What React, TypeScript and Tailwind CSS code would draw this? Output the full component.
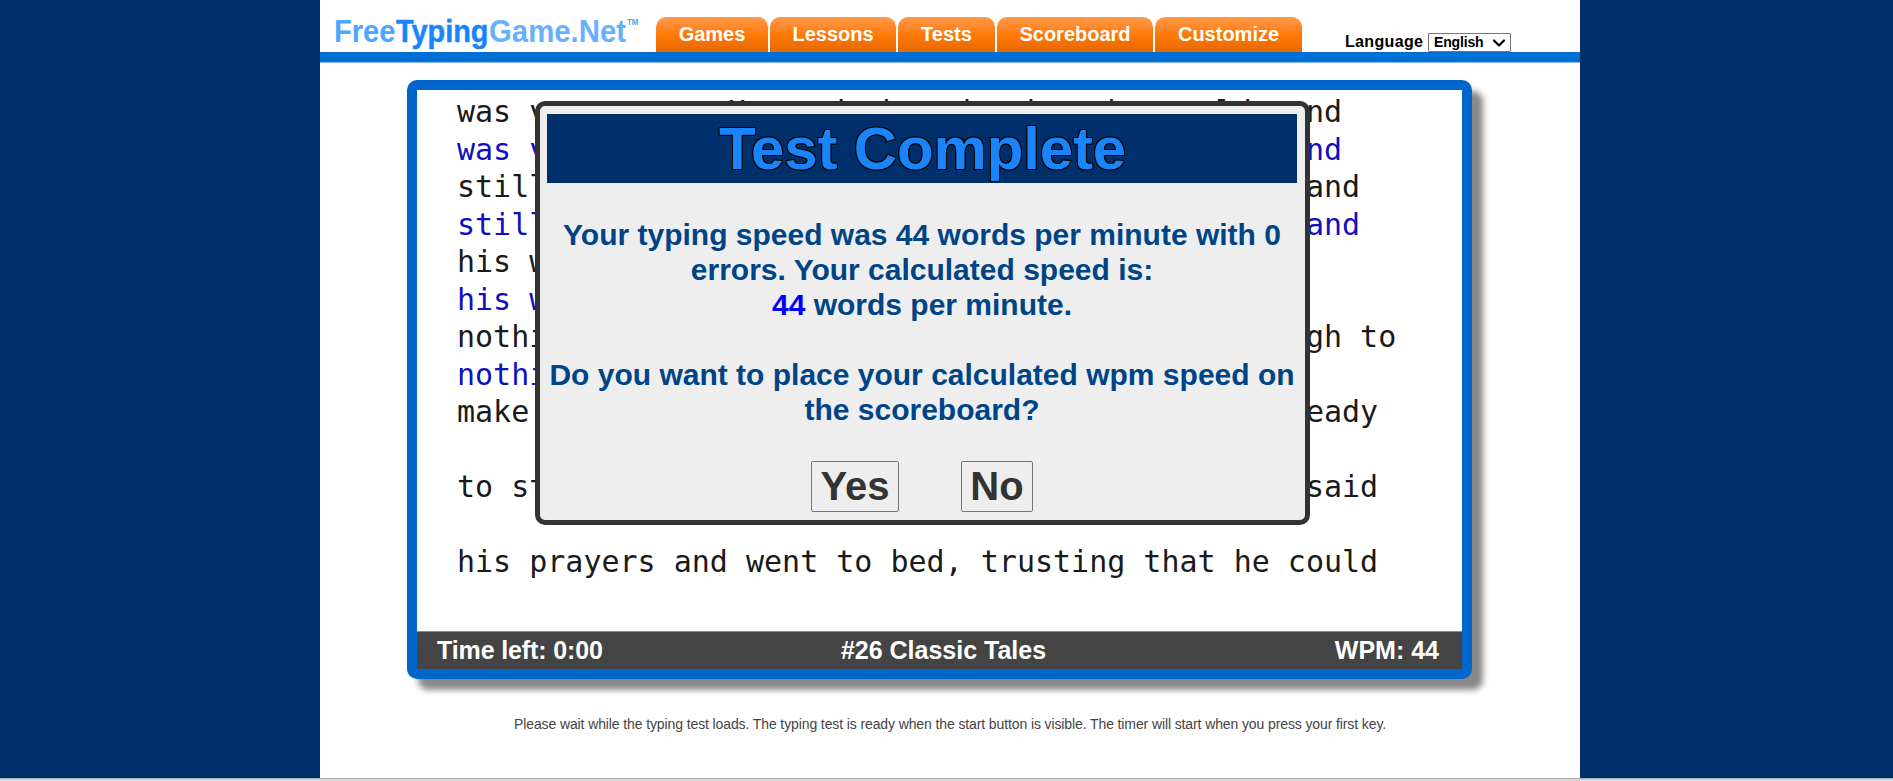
import { ChevronDown } from 'lucide-react';

const tabs = [
  { label: 'Games', width: 'w-[112px]' },
  { label: 'Lessons', width: 'w-[126px]' },
  { label: 'Tests', width: 'w-[97px]' },
  { label: 'Scoreboard', width: 'w-[156px]' },
  { label: 'Customize', width: 'w-[147px]' },
];

// typed lines are echoed in blue under the original
const lines = [
  { text: 'was very poor. He worked as hard as he could, and', typed: false },
  { text: 'was very poor. He worked as hard as he could, and', typed: true },
  { text: 'still he could not earn enough to keep himself and', typed: false },
  { text: 'still he could not earn enough to keep himself and', typed: true },
  { text: 'his wife. At last there came a day when he had', typed: false },
  { text: 'his wife. At last there came a day when he had', typed: true },
  { text: 'nothing left but one piece of leather, big enough to', typed: false },
  { text: 'nothing left but one piece', typed: true },
  { text: 'make one pair of shoes. He cut out the shoes, ready', typed: false },
  { text: '', typed: true },
  { text: 'to stitch, and left them on the bench; then he said', typed: false },
  { text: '', typed: true },
  { text: 'his prayers and went to bed, trusting that he could', typed: false },
];

function Logo() {
  return (
    <svg width="336" height="52" className="shrink-0 font-bold" aria-label="FreeTypingGame.Net">
      <text x="14" y="42" fontSize="32" fill="#4da6ff" textLength="61.5" lengthAdjust="spacingAndGlyphs">Free</text>
      <text x="76" y="42" fontSize="32" fill="#1a85fa" stroke="#1a85fa" strokeWidth="0.5" textLength="92.5" lengthAdjust="spacingAndGlyphs">Typing</text>
      <text x="169" y="42" fontSize="32" fill="#66b0ff" textLength="137" lengthAdjust="spacingAndGlyphs">Game.Net</text>
      <text x="307" y="25" fontSize="9" fill="#4da0f0" textLength="11.5" lengthAdjust="spacingAndGlyphs">TM</text>
    </svg>
  );
}

function Header() {
  return (
    <header className="border-b border-[#80b8ea]">
      <div className="flex h-[52px] items-end">
        <Logo />
        <nav className="flex gap-[2px]">
          {tabs.map((tab) => (
            <a
              key={tab.label}
              href="#"
              className={`${tab.width} flex h-[35px] items-center justify-center rounded-t-[10px] bg-linear-to-b from-[#ff9a45] via-[#ff7a05] to-[#e86800] pb-[2px] text-[20px] font-bold text-white`}
            >
              {tab.label}
            </a>
          ))}
        </nav>
        <div className="ml-[43px] flex items-end font-bold text-black">
          <span className="mr-[5px] w-[78px] text-[16px] leading-[20px] tracking-[0.35px]">Language</span>
          <button className="flex h-[19px] w-[83px] items-center justify-between rounded-[1px] border border-[#767676] bg-white pr-px pl-[5px] text-[14px] leading-[17px] tracking-[-0.15px]">
            English
            <ChevronDown size={20} strokeWidth={2.6} />
          </button>
        </div>
      </div>
      <div className="h-[10px] bg-[#0070d4]" />
    </header>
  );
}

function TestCompleteDialog() {
  return (
    <div className="absolute top-[11px] left-[118px] h-[424px] w-[775px] rounded-[10px] border-[5px] border-[#333] bg-[#eee] pt-[8px] pr-[8px] pl-[7px] text-center font-bold">
      <h1 className="h-[69px] bg-[#00306b] pl-px text-[60px] leading-[69px] tracking-[-0.15px] text-[#1a85fa] [text-shadow:-1px_-1px_0_#000,1px_-1px_0_#000,-1px_1px_0_#000,1px_1px_0_#000]">
        Test Complete
      </h1>
      <div className="mt-[34px] text-[30px] leading-[35px] whitespace-nowrap text-[#004488]">
        <p>Your typing speed was 44 words per minute with 0</p>
        <p>errors. Your calculated speed is:</p>
        <p>
          <span className="text-[#0000ff]">44</span> words per minute.
        </p>
        <p className="mt-[35px]">Do you want to place your calculated wpm speed on</p>
        <p>the scoreboard?</p>
      </div>
      <div className="mt-[34px] flex justify-center gap-[62px] text-[40px] leading-[49px] text-[#333]">
        <button className="h-[51px] w-[88px] rounded-[2px] border border-[#767676]">Yes</button>
        <button className="h-[51px] w-[72px] rounded-[2px] border border-[#767676]">No</button>
      </div>
    </div>
  );
}

export default function App() {
  return (
    <div className="flex h-[781px] w-[1893px] flex-col overflow-hidden bg-[#00306b] font-['Liberation_Sans',Arial,sans-serif]">
      <div className="ml-[320px] h-[778px] w-[1260px] bg-white">
        <Header />
        <main className="pt-[17px]">
          <div className="relative ml-[87px] flex h-[599px] w-[1065px] flex-col rounded-[10px] border-[10px] border-[#0066cc] bg-white shadow-[11px_11px_6px_#888]">
            <div className="flex-1 pt-[3px] pl-[40px] font-['DejaVu_Sans_Mono',monospace] text-[30px] leading-[37.5px] whitespace-pre">
              {lines.map((line, i) => (
                <p key={i} className={`h-[37.5px] ${line.typed ? 'text-[#0f0fc0]' : 'text-[#1a1a1a]'}`}>
                  {line.text}
                </p>
              ))}
            </div>
            <div className="grid h-[38px] grid-cols-[1fr_auto_1fr] items-center border-t border-[#8a8a8a] bg-[#444] pr-[23px] pl-[20px] text-[25px] font-bold text-white">
              <span className="tracking-[-0.12px]">Time left: 0:00</span>
              <span className="pl-[11px]">#26 Classic Tales</span>
              <span className="text-right">WPM: 44</span>
            </div>
            <TestCompleteDialog />
          </div>
          <p className="mt-[35px] text-center text-[14px] leading-[20px] tracking-[-0.11px] text-[#444]">
            Please wait while the typing test loads. The typing test is ready when the start button is visible. The timer will start when you press your first key.
          </p>
        </main>
      </div>
      <footer className="h-[3px] border-t border-[#aaa] bg-[#d8d8d8]" />
    </div>
  );
}
